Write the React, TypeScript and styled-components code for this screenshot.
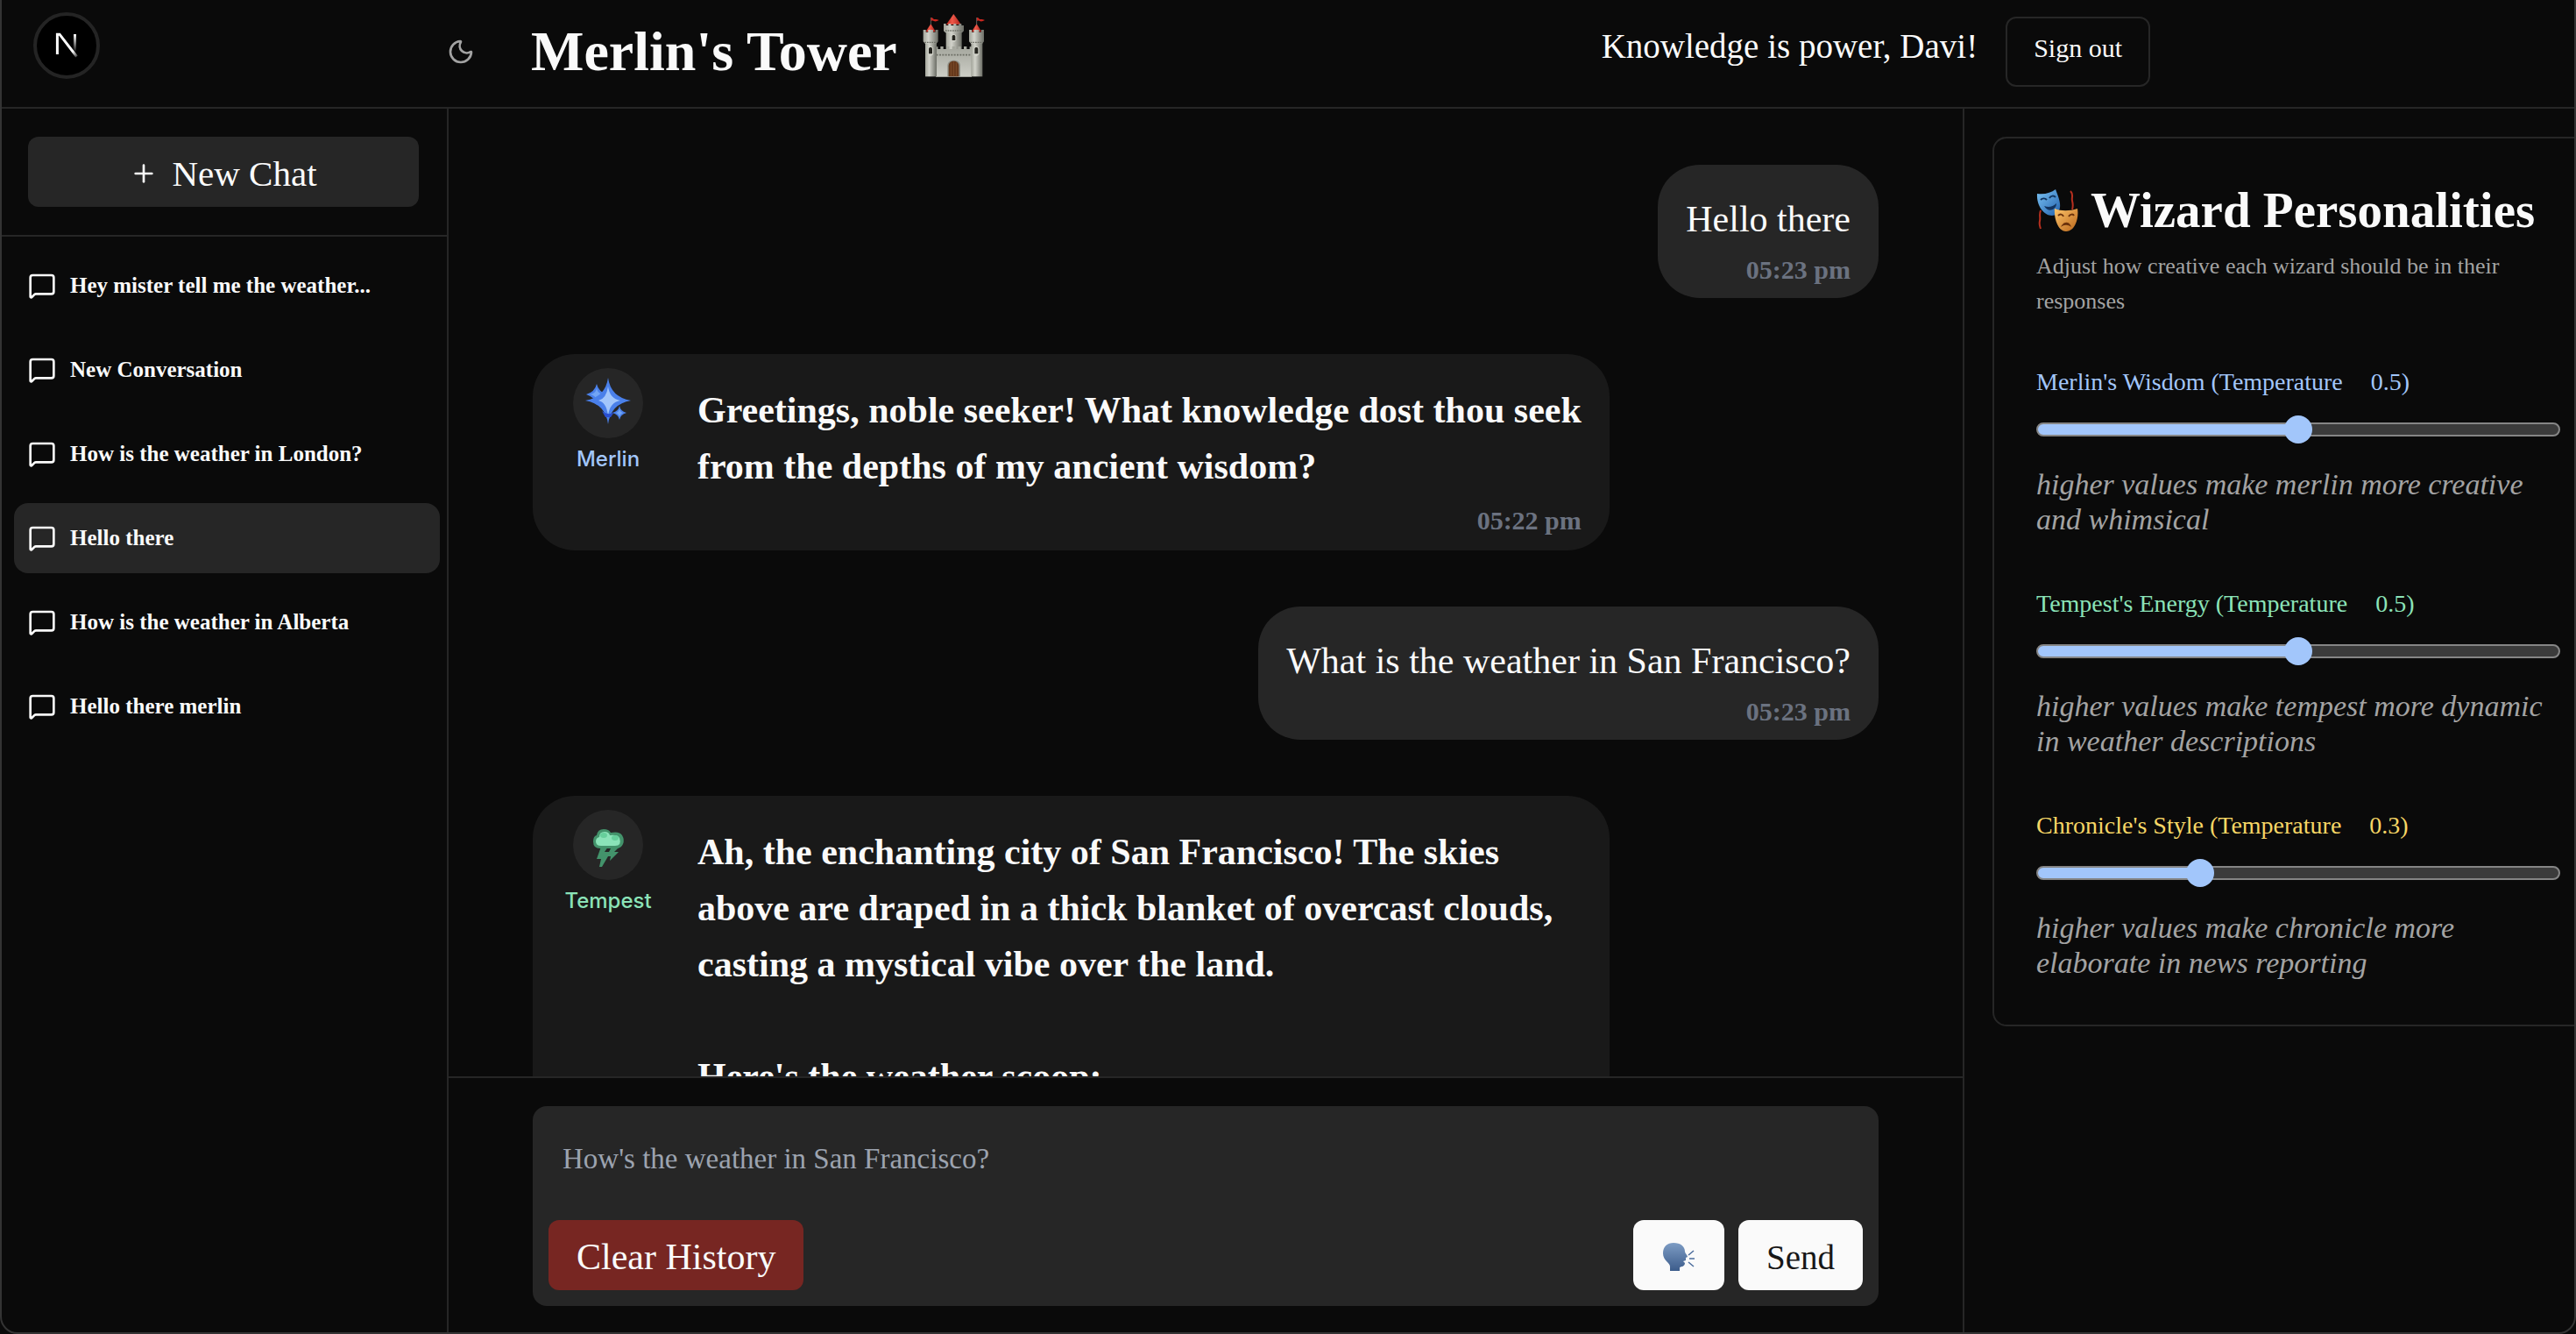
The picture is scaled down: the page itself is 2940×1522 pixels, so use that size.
import React, { useState } from "react";
import styled, { createGlobalStyle } from "styled-components";
import { MessageSquare, Moon, Plus } from "lucide-react";

const serif = `"Liberation Serif", "Noto Sans", serif`;
const line = "#262626";

const GlobalStyle = createGlobalStyle`
  * { box-sizing: border-box; }
  html, body { margin: 0; background: #0a0a0a; }
  body { color: #fafafa; font-family: ${serif}; }
  h1, h2, p, ul { margin: 0; padding: 0; font-weight: inherit; }
  button, textarea { font-family: inherit; color: inherit; border: 0; }
`;

const Page = styled.div`
  height: 100vh;
  display: flex;
  flex-direction: column;
  overflow: hidden;
`;

const WindowFrame = styled.div`
  position: fixed;
  inset: -20px 0 0 0;
  border: 2px solid #343434;
  border-radius: 0 0 20px 20px;
  pointer-events: none;
`;

const DevBadge = styled.button`
  position: fixed;
  left: 38px;
  top: 14px;
  width: 76px;
  height: 76px;
  padding: 0;
  display: grid;
  place-items: center;
  border: 4px solid #242424;
  border-radius: 50%;
  background: #000;
`;

const Header = styled.header`
  flex: none;
  height: 124px;
  padding: 0 0 4px 24px;
  border-bottom: 2px solid ${line};
  display: flex;
`;

const HeaderInner = styled.div`
  width: 100%;
  max-width: 1944px;
  margin: 0 auto;
  display: flex;
  align-items: center;
`;

const ThemeToggle = styled.button`
  padding: 0;
  margin-right: 64px;
  display: flex;
  background: none;
  color: #a3a3a3;
`;

const Title = styled.h1`
  flex: 1;
  display: flex;
  align-items: center;
  gap: 28px;
  font-size: 64px;
  line-height: 80px;
  font-weight: bold;
`;

const Welcome = styled.p`
  margin-right: 32px;
  padding-bottom: 12px;
  font-size: 39px;
  line-height: 48px;
`;

const SignOut = styled.button`
  height: 80px;
  padding: 0 30px 8px;
  background: none;
  border: 2px solid ${line};
  border-radius: 12px;
  font-size: 30px;
`;

const Body = styled.div`
  flex: 1;
  min-height: 0;
  display: grid;
  grid-template-columns: 512px minmax(0, 1fr) 700px;
`;

const Sidebar = styled.nav`
  border-right: 2px solid ${line};
`;

const NewChatArea = styled.div`
  padding: 32px;
  border-bottom: 2px solid ${line};
`;

const NewChat = styled.button`
  width: 100%;
  height: 80px;
  padding: 4px 32px 0;
  display: flex;
  align-items: center;
  justify-content: center;
  gap: 16px;
  background: #262626;
  border-radius: 12px;
  font-size: 41px;
`;

const ChatList = styled.ul`
  list-style: none;
  padding: 16px 8px 16px 16px;
  display: flex;
  flex-direction: column;
  gap: 16px;
`;

const ChatItem = styled.button<{ $active: boolean }>`
  width: 100%;
  height: 80px;
  padding: 0 16px;
  display: flex;
  align-items: center;
  gap: 16px;
  border-radius: 16px;
  background: ${(p) => (p.$active ? "#262626" : "transparent")};
  font-size: 25px;
  font-weight: bold;
  text-align: left;
`;

const ChatPane = styled.main`
  min-width: 0;
  min-height: 0;
  display: flex;
  flex-direction: column;
`;

const Scroller = styled.div`
  flex: 1;
  min-height: 0;
  overflow: hidden;
  padding: 64px 32px 0;
`;

const Messages = styled.div`
  max-width: 1536px;
  margin: 0 auto;
  display: flex;
  flex-direction: column;
  gap: 64px;
`;

const UserBubble = styled.article`
  align-self: flex-end;
  max-width: 80%;
  padding: 34px 32px 12px;
  border-radius: 48px;
  background: #262626;
`;

const UserText = styled.p`
  font-size: 42px;
  line-height: 56px;
`;

const BotBubble = styled.article`
  align-self: flex-start;
  width: 80%;
  padding: 16px 32px 14px;
  display: flex;
  gap: 48px;
  border-radius: 48px;
  background: #191919;
`;

const Persona = styled.div<{ $color: string }>`
  flex: none;
  width: 108px;
  display: flex;
  flex-direction: column;
  align-items: center;
  gap: 8px;
  color: ${(p) => p.$color};
  font-family: Inter, "Liberation Sans", sans-serif;
  font-size: 24px;
  line-height: 32px;
  font-weight: 500;
`;

const Avatar = styled.div`
  width: 80px;
  height: 80px;
  border-radius: 50%;
  background: #262626;
`;

const BotContent = styled.div`
  flex: 1;
  min-width: 0;
  padding-top: 16px;
`;

const BotText = styled.p`
  font-size: 42px;
  line-height: 64px;
  font-weight: bold;
  white-space: pre-wrap;
`;

const Time = styled.time`
  display: block;
  margin-top: 10px;
  color: #6b7280;
  font-size: 30px;
  line-height: 40px;
  font-weight: bold;
  text-align: right;
`;

const Composer = styled.footer`
  flex: none;
  padding: 32px;
  border-top: 2px solid ${line};
`;

const ComposerCard = styled.form`
  max-width: 1536px;
  margin: 0 auto;
  padding: 18px;
  border-radius: 16px;
  background: #262626;
`;

const MessageBox = styled.textarea`
  display: block;
  width: 100%;
  height: 112px;
  padding: 22px 16px;
  background: none;
  outline: none;
  resize: none;
  font-size: 33px;
  line-height: 40px;
  &::placeholder { color: #9ca3af; }
`;

const Actions = styled.div`
  display: flex;
  gap: 16px;
`;

const ActionButton = styled.button<{ $danger?: boolean }>`
  height: 80px;
  padding: 4px 32px 0;
  display: flex;
  align-items: center;
  border-radius: 12px;
  background: ${(p) => (p.$danger ? "#772622" : "#fafafa")};
  color: ${(p) => (p.$danger ? "#fafafa" : "#171717")};
  margin-right: ${(p) => (p.$danger ? "auto" : "0")};
  font-size: ${(p) => (p.$danger ? "42px" : "39px")};
`;

const Aside = styled.aside`
  min-width: 0;
  overflow: hidden;
  padding: 32px;
  border-left: 2px solid ${line};
`;

const Panel = styled.section`
  width: 698px;
  padding: 50px 48px;
  border: 2px solid ${line};
  border-radius: 16px;
`;

const PanelTitle = styled.h2`
  display: flex;
  align-items: center;
  gap: 14px;
  font-size: 57px;
  line-height: 64px;
  font-weight: bold;
  white-space: nowrap;
`;

const PanelIntro = styled.p`
  margin: 12px 0 52px;
  color: #a3a3a3;
  font-size: 26px;
  line-height: 40px;
`;

const Groups = styled.div`
  display: flex;
  flex-direction: column;
  gap: 56px;
`;

const GroupLabel = styled.label<{ $color: string }>`
  display: flex;
  gap: 32px;
  color: ${(p) => p.$color};
  font-size: 28px;
  line-height: 40px;
`;

const Range = styled.input`
  appearance: none;
  display: block;
  width: 100%;
  height: 32px;
  margin: 18px 0 27px;
  background: none;
  &::-webkit-slider-runnable-track {
    height: 16px;
    border: 2px solid #858585;
    border-radius: 8px;
    background: linear-gradient(to right, #a2c6fb var(--fill), #3b3b3b var(--fill));
  }
  &::-webkit-slider-thumb {
    appearance: none;
    width: 32px;
    height: 32px;
    margin-top: -10px;
    border-radius: 50%;
    background: #a2c6fb;
  }
`;

const GroupHint = styled.p`
  color: #a3a3a3;
  font-size: 34px;
  line-height: 40px;
  font-style: italic;
`;

const BadgeLogo = () => (
  <svg width="32" height="32" viewBox="0 0 32 32" fill="none" aria-hidden>
    <defs>
      <linearGradient id="n1" x1="15" y1="16" x2="29" y2="31" gradientUnits="userSpaceOnUse">
        <stop offset="0.5" stopColor="#fff" />
        <stop offset="1" stopColor="#fff" stopOpacity="0" />
      </linearGradient>
      <linearGradient id="n2" x1="0" y1="3" x2="0" y2="24" gradientUnits="userSpaceOnUse">
        <stop stopColor="#fff" />
        <stop offset="1" stopColor="#fff" stopOpacity="0" />
      </linearGradient>
    </defs>
    <path d="M5.400 26V3.200H8L27.500 28.500" stroke="url(#n1)" strokeWidth="3" />
    <path d="M25.500 3V24" stroke="url(#n2)" strokeWidth="3" />
  </svg>
);

const CastleArt = styled.svg`
  margin-bottom: 14px;
`;

const Castle = () => (
  <CastleArt width="74" height="74" viewBox="100 45 222 222" aria-hidden>
    <defs>
      <linearGradient id="stone" x1="0" x2="1">
        <stop offset="0" stopColor="#a2a49a" />
        <stop offset="0.35" stopColor="#d2d3cb" />
        <stop offset="1" stopColor="#6c6e66" />
      </linearGradient>
      <linearGradient id="roof" x1="0" x2="1">
        <stop offset="0" stopColor="#b8261d" />
        <stop offset="0.4" stopColor="#f0594a" />
        <stop offset="1" stopColor="#a81f18" />
      </linearGradient>
      <linearGradient id="wall" x1="0" x2="0" y1="0" y2="1">
        <stop offset="0" stopColor="#a4a69d" />
        <stop offset="1" stopColor="#cdcec6" />
      </linearGradient>
    </defs>
    <path d="M183 100h54v80h-54z" fill="url(#stone)" />
    <path d="M184 84 209 48 235 84z" fill="url(#roof)" />
    <path d="M175 81h8v6h8v-6h9v6h9v-6h9v6h9v-6h9v6h8v19l-6 6h-57l-6-6z" fill="url(#stone)" />
    <path d="M181 105h57" stroke="#6d6f66" strokeWidth="4" strokeDasharray="5 3" />
    <path d="M148 160h7v8h9v-9h10v9h10v-9h10v9h10v-9h10v9h10v-9h10v9h10v-9h10v9h10v-8h7v103H148z" fill="url(#wall)" />
    <path d="M150 188h120" stroke="#6f7168" strokeWidth="5" strokeDasharray="6 4" />
    <path d="M188 262v-38c0-24 44-24 44 0v38z" fill="#8f9188" />
    <path d="M192 262v-36c0-22 35-22 35 0v36z" fill="#64381c" />
    <path d="M200 214v48M209 211v51M218 214v48" stroke="#8a5630" strokeWidth="2" />
    <path d="M201 139v-14c0-11 17-11 17 0v14l-8 5z" fill="#cfd0c7" />
    <path d="M204 138v-13c0-7 11-7 11 0v13z" fill="#24241f" />
    {[0, 157].map((dx) => (
      <g key={dx} transform={`translate(${dx} 0)`}>
        <path d="M112 142h39v120h-39z" fill="url(#stone)" />
        <path d="M113 109 131 82 148 109z" fill="url(#roof)" />
        <path d="M105 102h9v8h8v-8h17v8h8v-8h9v40l-6 8h-38l-7-8z" fill="url(#stone)" />
        <path d="M110 145h42" stroke="#6d6f66" strokeWidth="4" strokeDasharray="5 3" />
        <path d="M131 84V60" stroke="#8b8c88" strokeWidth="2" />
        <path d="M132 60c8 0 6 7 14 6 5 0 7 1 13 3-7 4-12 6-18 3-4-2-5-1-9 0z" fill="#c9271f" />
        <path d="M121 186v-18c0-12 18-12 18 0v18l-9 7z" fill="#d4d5cc" />
        <path d="M124 184v-16c0-8 12-8 12 0v16z" fill="#24241f" />
      </g>
    ))}
  </CastleArt>
);

const Masks = () => (
  <svg width="48" height="48" viewBox="0 0 48 48" fill="none" aria-hidden>
    <defs>
      <linearGradient id="blue" x1="0" y1="0" x2="1" y2="1">
        <stop stopColor="#7cc4f5" />
        <stop offset="1" stopColor="#2362ad" />
      </linearGradient>
      <linearGradient id="gold" x1="0" y1="0" x2="1" y2="1">
        <stop stopColor="#ffc66b" />
        <stop offset="1" stopColor="#b9651a" />
      </linearGradient>
    </defs>
    <path d="M39 2c4 4 1 7 2 11s1 7 0 10M5 24c-2 5 0 8-1 12-1 4 0 6 1 9" stroke="#b8301f" strokeWidth="2" />
    <path d="M1 5c9 1 16-1 21-5 3 8 6 15 5 21-1 6-5 9-9 9C9 30 0 19 1 5z" fill="url(#blue)" />
    <path d="M5 12c2-2 5-2 7 0M15 10c2-3 5-3 7-1" stroke="#12345f" strokeWidth="2" />
    <path d="M9 19c5 2 10 1 14-3 0 8-10 11-14 3z" fill="#12345f" />
    <path d="M21 22c7 3 17 3 26 0 2 11-3 26-13 26-9 0-14-14-13-26z" fill="url(#gold)" />
    <path d="M25 30c2-2 5-2 6 1M37 31c2-3 5-3 6-1" stroke="#6a310b" strokeWidth="2" />
    <path d="M28 43c3-7 10-7 12 0-4-3-8-3-12 0z" fill="#6a310b" />
  </svg>
);

const Sparkles = () => (
  <svg width="80" height="80" viewBox="0 0 80 80" aria-hidden>
    <path d="M27 18q2 9 12 12-10 3-12 12-2-9-12-12 10-3 12-12z" fill="#4a80ea" />
    <path d="M27 23q1 6 8 7-7 1-8 7-1-6-8-7 7-1 8-7z" fill="#72a5f4" />
    <path d="M53 43q1 6 8 8-7 2-8 8-1-6-8-8 7-2 8-8z" fill="#4a80ea" />
    <path d="M53 47q1 3 4 4-3 1-4 4-1-3-4-4 3-1 4-4z" fill="#72a5f4" />
    <path d="M40 11q3 22 26 26-23 4-26 27-3-23-26-27 23-4 26-26z" fill="#4a80ea" />
    <path d="M40 21q2 14 14 16-12 2-14 17-2-15-11-17 9-2 11-16z" fill="#a2c6fb" />
    <path d="M33 49q7 6 14 1l-4 6h-6z" fill="#2a4fd0" />
  </svg>
);

const Storm = () => (
  <svg width="80" height="80" viewBox="0 0 80 80" aria-hidden>
    <path d="M32 42h8l-4 6h5l3-6h9l-6 6h5L42 58l1-5h-3L33 65h-3l2-9h-5z" fill="#43936b" />
    <path d="M23 36q0-6 4-7 1-7 8-7 6 0 8 4 10-2 13 3 3 5 1 10-2 5-8 5H31q-8 0-8-8z" fill="#43936b" />
    <path d="M26 36q0-4 4-5 0-6 6-6 5 0 6 4 9-1 11 3 3 9-5 9H32q-6 0-6-5z" fill="#8be3b8" />
    <ellipse cx="35" cy="29" rx="4" ry="3" fill="#66cf9b" />
    <ellipse cx="48" cy="32" rx="4" ry="3" fill="#66cf9b" />
  </svg>
);

const SpeakingHead = () => (
  <svg width="40" height="36" viewBox="0 0 40 36" fill="none" aria-hidden>
    <defs>
      <linearGradient id="head" x1="0" y1="0" x2="0" y2="1">
        <stop stopColor="#7d9cc4" />
        <stop offset="1" stopColor="#3c5c8b" />
      </linearGradient>
    </defs>
    <path d="M14 2c8 0 13 4 13 10 0 2 3 4 3 6l-2 1v3l-3 1 2 2c0 4-4 4-6 5v4H10v-5c0-4-8-7-8-15C2 6 7 2 14 2z" fill="url(#head)" />
    <path d="M31 16l6-5M32 20h6M31 24l6 5" stroke="#4b6c9c" strokeWidth="1.500" />
  </svg>
);

const chats = [
  "Hey mister tell me the weather...",
  "New Conversation",
  "How is the weather in London?",
  "Hello there",
  "How is the weather in Alberta",
  "Hello there merlin",
];

const wizards = [
  { id: "merlin", name: "Merlin's Wisdom", color: "#a2c6fb", value: 0.5, hint: "higher values make merlin more creative and whimsical" },
  { id: "tempest", name: "Tempest's Energy", color: "#8be3b8", value: 0.5, hint: "higher values make tempest more dynamic in weather descriptions" },
  { id: "chronicle", name: "Chronicle's Style", color: "#f6d665", value: 0.3, hint: "higher values make chronicle more elaborate in news reporting" },
];

function WizardSlider({ id, name, color, value: initial, hint }: (typeof wizards)[number]) {
  const [value, setValue] = useState(initial);
  return (
    <div>
      <GroupLabel htmlFor={id} $color={color}>
        <span>{name} (Temperature</span>
        <span>{value.toFixed(1)})</span>
      </GroupLabel>
      <Range
        id={id}
        type="range"
        min={0}
        max={1}
        step={0.1}
        value={value}
        onChange={(e) => setValue(Number(e.target.value))}
        style={{ "--fill": `${value * 100}%` } as React.CSSProperties}
      />
      <GroupHint>{hint}</GroupHint>
    </div>
  );
}

export default function App() {
  const [active, setActive] = useState(3);
  return (
    <Page>
      <GlobalStyle />
      <Header>
        <HeaderInner>
          <ThemeToggle aria-label="Toggle theme">
            <Moon size={32} />
          </ThemeToggle>
          <Title>
            Merlin's Tower <Castle />
          </Title>
          <Welcome>Knowledge is power, Davi!</Welcome>
          <SignOut>Sign out</SignOut>
        </HeaderInner>
      </Header>
      <Body>
        <Sidebar>
          <NewChatArea>
            <NewChat>
              <Plus size={32} /> New Chat
            </NewChat>
          </NewChatArea>
          <ChatList>
            {chats.map((chat, i) => (
              <li key={chat}>
                <ChatItem $active={i === active} onClick={() => setActive(i)}>
                  <MessageSquare size={32} />
                  {chat}
                </ChatItem>
              </li>
            ))}
          </ChatList>
        </Sidebar>
        <ChatPane>
          <Scroller>
            <Messages>
              <UserBubble>
                <UserText>Hello there</UserText>
                <Time>05:23 pm</Time>
              </UserBubble>
              <BotBubble>
                <Persona $color="#a2c6fb">
                  <Avatar><Sparkles /></Avatar>
                  Merlin
                </Persona>
                <BotContent>
                  <BotText>Greetings, noble seeker! What knowledge dost thou seek from the depths of my ancient wisdom?</BotText>
                  <Time>05:22 pm</Time>
                </BotContent>
              </BotBubble>
              <UserBubble>
                <UserText>What is the weather in San Francisco?</UserText>
                <Time>05:23 pm</Time>
              </UserBubble>
              <BotBubble>
                <Persona $color="#8be3b8">
                  <Avatar><Storm /></Avatar>
                  Tempest
                </Persona>
                <BotContent>
                  <BotText>
                    {"Ah, the enchanting city of San Francisco! The skies above are draped in a thick blanket of overcast clouds, casting a mystical vibe over the land.\n\nHere's the weather scoop:"}
                  </BotText>
                </BotContent>
              </BotBubble>
            </Messages>
          </Scroller>
          <Composer>
            <ComposerCard onSubmit={(e) => e.preventDefault()}>
              <MessageBox aria-label="Message" placeholder="How's the weather in San Francisco?" />
              <Actions>
                <ActionButton type="button" $danger>Clear History</ActionButton>
                <ActionButton type="button" aria-label="Speak"><SpeakingHead /></ActionButton>
                <ActionButton type="submit">Send</ActionButton>
              </Actions>
            </ComposerCard>
          </Composer>
        </ChatPane>
        <Aside>
          <Panel>
            <PanelTitle>
              <Masks /> Wizard Personalities
            </PanelTitle>
            <PanelIntro>Adjust how creative each wizard should be in their responses</PanelIntro>
            <Groups>
              {wizards.map((w) => (
                <WizardSlider key={w.id} {...w} />
              ))}
            </Groups>
          </Panel>
        </Aside>
      </Body>
      <WindowFrame />
      <DevBadge aria-label="Open developer tools">
        <BadgeLogo />
      </DevBadge>
    </Page>
  );
}
